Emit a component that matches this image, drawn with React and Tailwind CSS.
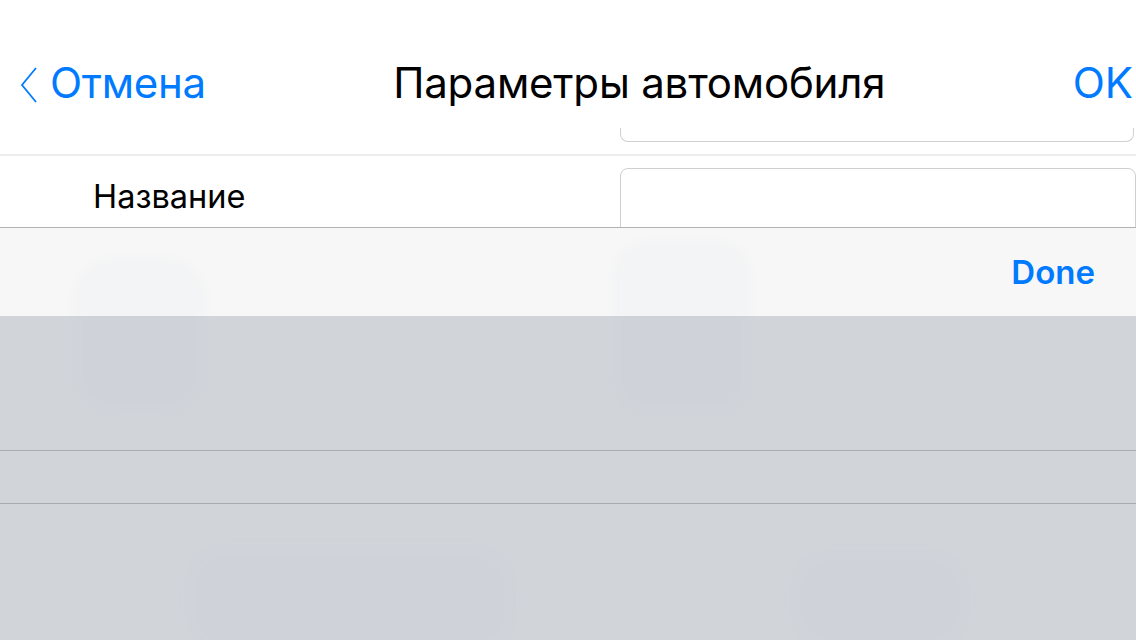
export default function App() {
  const font = { fontFamily: "Inter, 'Noto Sans', sans-serif" };
  return (
    <div className="w-[1136px] h-[640px] overflow-hidden bg-white flex flex-col relative" style={font}>
      {/* nav bar */}
      <div className="h-[128px] flex items-center pt-[38px] shrink-0">
        <div className="flex items-center pl-[20px] pr-[8px] text-[#007aff]">
          <svg width="18" height="36" viewBox="0 0 18 36" className="mr-[12px] mt-[3px]">
            <path d="M16 1 L2 18 L16 35" fill="none" stroke="#007aff" strokeWidth="1.8" />
          </svg>
          <span className="text-[42px] leading-none tracking-[-0.3px]">Отмена</span>
        </div>
        <div className="flex-1 text-center text-[42px] leading-none text-black tracking-[-0.2px]">
          Параметры автомобиля
        </div>
        <div className="pr-[3px] pl-[8px] text-[42px] leading-none text-[#007aff]">OK</div>
      </div>

      {/* first row, mostly under nav */}
      <div className="h-[26px] shrink-0">
        <div className="ml-[620px] w-[514px] h-[14px] border-b border-x border-[#cfcfcf] rounded-b-[8px] border-t-0" />
      </div>
      <div className="h-[2px] bg-[#ececec] shrink-0" />

      {/* name row */}
      <div className="h-[71px] flex items-start shrink-0 overflow-hidden">
        <div className="w-[620px] pl-[93px] pt-[25px] text-[32.5px] leading-none text-black">Название</div>
        <div className="mt-[12px] w-[516px] h-[70px] border border-[#cfcfcf] rounded-[8px]" />
      </div>

      {/* keyboard accessory */}
      <div className="h-[89px] bg-[#f7f7f7] border-t border-[#b1b1b1] flex items-center justify-end pr-[41px] shrink-0">
        <span className="text-[33px] font-semibold text-[#007aff] leading-none">Done</span>
      </div>

      {/* keyboard */}
      <div className="flex-1 bg-[#d1d4d9] flex flex-col">
        <div className="h-[134px]" />
        <div className="h-px bg-[#a8abb0]" />
        <div className="h-[52px]" />
        <div className="h-px bg-[#a8abb0]" />
      </div>

      {/* faint ghosted keys */}
      <div className="absolute left-[72px] top-[258px] w-[135px] h-[156px] rounded-[40px] bg-[#c0cadc] opacity-[0.06] blur-[4px]" />
      <div className="absolute left-[612px] top-[240px] w-[140px] h-[176px] rounded-[36px] bg-[#c0cadc] opacity-[0.06] blur-[4px]" />
      <div className="absolute left-[185px] top-[545px] w-[330px] h-[110px] rounded-[40px] bg-[#c0cadc] opacity-[0.08] blur-[4px]" />
      <div className="absolute left-[790px] top-[550px] w-[180px] h-[100px] rounded-[40px] bg-[#c0cadc] opacity-[0.08] blur-[4px]" />
    </div>
  );
}
